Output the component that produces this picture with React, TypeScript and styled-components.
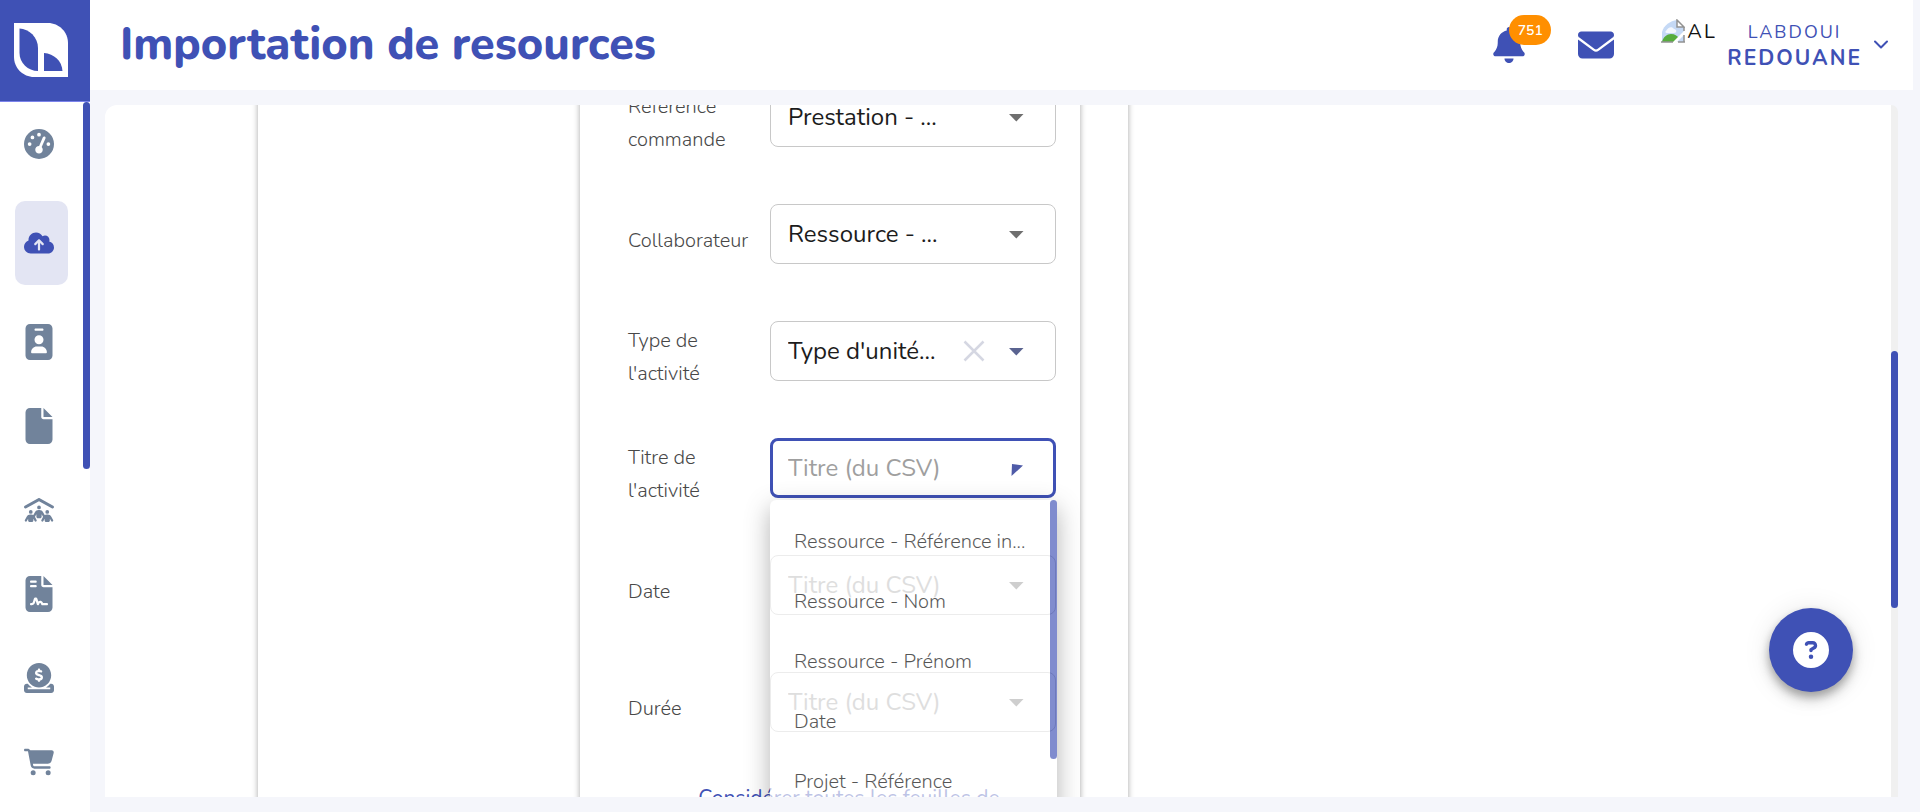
import React from 'react';
import styled, { createGlobalStyle, css } from 'styled-components';
import {
  FaBell,
  FaCartShopping,
  FaCircleDollarToSlot,
  FaCircleQuestion,
  FaCloudArrowUp,
  FaEnvelope,
  FaFile,
  FaFileContract,
  FaGaugeHigh,
  FaIdBadge,
  FaPeopleRoof,
} from 'react-icons/fa6';

const PRIMARY = '#3f51b5';
const BACKDROP = '#f5f6fb';

const GlobalStyle = createGlobalStyle`
  *, *::before, *::after { box-sizing: border-box; }
  body {
    margin: 0;
    background: ${BACKDROP};
    font-family: Nunito, Lato, "Open Sans", sans-serif;
    overflow: hidden;
  }
  button, select { font: inherit; }
  button { border: 0; padding: 0; background: none; cursor: pointer; }
`;

/* ---------- shell ---------- */

const Shell = styled.div`
  display: grid;
  grid-template-columns: 90px minmax(0, 1fr);
  height: 100vh;
`;

const Sidebar = styled.aside`
  display: flex;
  flex-direction: column;
  min-height: 0;
  background: #fff;
`;

const LogoLink = styled.a`
  flex: none;
  display: block;
  height: 102px;
  padding: 23px 14px;
  background: ${PRIMARY};
  border-bottom: 1px solid #7b83ec;

  svg { display: block; }
`;

const NavArea = styled.div`
  flex: 1;
  display: flex;
  justify-content: space-between;
  min-height: 0;
  overflow: hidden;
`;

const NavList = styled.nav`
  flex: 1;
  padding: 0 15px;
`;

const NavLink = styled.a<{ $active?: boolean }>`
  display: flex;
  align-items: center;
  justify-content: center;
  height: 84px;
  padding-right: 5px;
  border-radius: 10px;
  color: #71839b;

  svg { flex: none; width: 30px; height: 36px; }

  ${(p) =>
    p.$active &&
    css`
      margin: 15px 0;
      background: #e3e5f3;
      color: ${PRIMARY};
    `}
`;

const NavThumb = styled.div`
  width: 7px;
  height: 367px;
  border-radius: 4px;
  background: ${PRIMARY};
`;

const Main = styled.div`
  display: flex;
  flex-direction: column;
  min-width: 0;
  min-height: 0;
`;

/* ---------- header ---------- */

const Header = styled.header`
  flex: none;
  display: flex;
  align-items: center;
  justify-content: space-between;
  height: 90px;
  margin-right: 7px;
  padding: 0 25px 0 30px;
  background: #fff;
  color: ${PRIMARY};
`;

const Title = styled.h1`
  margin: 0;
  font-size: 45px;
  line-height: 60px;
  font-weight: 800;
`;

const HeaderActions = styled.div`
  display: flex;
  align-items: center;
`;

const IconButton = styled.button`
  position: relative;
  display: flex;
  margin-right: 51px;
  color: ${PRIMARY};
`;

const Badge = styled.span`
  position: absolute;
  left: 18px;
  top: -12px;
  width: 42px;
  height: 30px;
  border-radius: 15px;
  background: #ff8f00;
  color: #fff;
  font-size: 14px;
  line-height: 32px;
  font-weight: 600;
  text-align: center;
`;

const ProfileButton = styled.button`
  display: flex;
  align-items: center;
  margin-left: -4px;
  color: ${PRIMARY};
  letter-spacing: 2px;
`;

const Avatar = styled.span`
  display: flex;
  gap: 2px;
  width: 54px;
  height: 54px;
  padding-top: 1px;
  margin-right: 12px;
  color: #111;
  font-size: 20px;
  line-height: 26px;
  overflow: hidden;

  svg { flex: none; }
`;

const ProfileName = styled.span`
  display: flex;
  flex-direction: column;
  align-items: center;
  margin-right: 12px;
  font-size: 18px;
  line-height: 26px;

  strong { font-size: 21px; font-weight: 700; }
`;

/* ---------- content ---------- */

const Content = styled.main`
  flex: 1;
  display: flex;
  min-height: 0;
  padding: 15px;
  margin-right: 7px;
`;

const ScrollCard = styled.section`
  flex: 1;
  display: flex;
  align-items: flex-start;
  min-width: 0;
  border-radius: 12px 0 0 0;
  background: #fff;
  overflow: hidden;
`;

const Track = styled.div`
  flex: none;
  width: 7px;
  padding-top: 246px;
  border-radius: 0 7px 0 0;
  background: #f0f0f0;
`;

const TrackThumb = styled.div`
  height: 257px;
  border-radius: 4px;
  background: ${PRIMARY};
`;

const OuterPanel = styled.div`
  width: 870px;
  margin: -47px 0 0 153px;
  padding: 0 48px 0 322px;
  box-shadow: 0 0 6px rgba(0, 0, 0, 0.35);
`;

const MappingForm = styled.form`
  display: flex;
  flex-direction: column;
  min-height: 860px;
  padding: 0 24px 0 48px;
  box-shadow: 0 0 6px rgba(0, 0, 0, 0.35);
`;

const FieldRow = styled.div`
  display: grid;
  grid-template-columns: 142px minmax(0, 1fr);
  align-items: center;
  height: 117px;
`;

const FieldLabel = styled.label`
  padding: 13px 8px 0 0;
  color: #484848;
  font-size: 20px;
  font-weight: 300;
  line-height: 33px;
`;

const Control = styled.div`
  position: relative;
  color: #6f6f6f;
`;

const Select = styled.select<{ $empty?: boolean; $open?: boolean }>`
  display: block;
  appearance: none;
  width: 100%;
  height: 60px;
  margin: 0;
  padding: 0 100px 0 ${(p) => (p.$open ? 15 : 17)}px;
  border: ${(p) => (p.$open ? `3px solid ${PRIMARY}` : '1px solid #c8c8c8')};
  border-radius: 8px;
  background: #fff;
  color: ${(p) => (p.$empty ? '#9f9f9f' : '#1c1c1c')};
  font-size: 24px;
  outline: none;
`;

const Arrow = styled.svg`
  position: absolute;
  right: 32px;
  top: 22px;
  pointer-events: none;
`;

const ClearButton = styled.button`
  position: absolute;
  right: 71px;
  top: 19px;
  display: flex;
`;

const Menu = styled.ul`
  position: absolute;
  z-index: 2;
  top: 62px;
  left: 0;
  width: 287px;
  height: 384px;
  margin: 0;
  padding: 12px 24px;
  border-radius: 6px;
  background: #fff;
  box-shadow: 0 8px 24px rgba(0, 0, 0, 0.45);
  opacity: 0.66;
  list-style: none;
`;

const MenuItem = styled.li`
  color: #000;
  font-size: 20px;
  font-weight: 300;
  line-height: 60px;
  white-space: nowrap;
`;

const MenuThumb = styled.div`
  position: absolute;
  top: 0;
  right: 0;
  width: 7px;
  height: 259px;
  border-radius: 4px;
  background: ${PRIMARY};
`;

const AllSheetsButton = styled.button`
  align-self: center;
  margin: 22px 0 0 14px;
  color: ${PRIMARY};
  font-size: 21px;
  line-height: 32px;
`;

const HelpButton = styled.button`
  position: fixed;
  right: 67px;
  bottom: 120px;
  display: flex;
  align-items: center;
  justify-content: center;
  width: 84px;
  height: 84px;
  border-radius: 50%;
  background: ${PRIMARY};
  color: #fff;
  box-shadow: 0 5px 8px rgba(0, 0, 0, 0.25), 0 8px 16px rgba(0, 0, 0, 0.14),
    0 2px 28px rgba(0, 0, 0, 0.1);
`;

/* ---------- data ---------- */

const NAV = [
  { label: 'Tableau de bord', Icon: FaGaugeHigh },
  { label: 'Importation', Icon: FaCloudArrowUp, active: true },
  { label: 'Collaborateurs', Icon: FaIdBadge },
  { label: 'Documents', Icon: FaFile },
  { label: 'Équipes', Icon: FaPeopleRoof },
  { label: 'Contrats', Icon: FaFileContract },
  { label: 'Facturation', Icon: FaCircleDollarToSlot },
  { label: 'Achats', Icon: FaCartShopping },
];

const PLACEHOLDER = 'Titre (du CSV)';

const FIELDS: { label: string; value?: string; clearable?: boolean; open?: boolean }[] = [
  { label: 'Référence commande', value: 'Prestation - ...' },
  { label: 'Collaborateur', value: 'Ressource - ...' },
  { label: "Type de l'activité", value: "Type d'unité...", clearable: true },
  { label: "Titre de l'activité", open: true },
  { label: 'Date' },
  { label: 'Durée' },
];

const OPTIONS = [
  'Ressource - Référence in...',
  'Ressource - Nom',
  'Ressource - Prénom',
  'Date',
  'Projet - Référence',
];

/* ---------- drawings ---------- */

const Logo = () => (
  <svg width="54" height="54" viewBox="0 0 54 54" aria-hidden="true">
    <path fill="#fff" d="M0 0h34c11 0 20 9 20 20v34H20C9 54 0 45 0 34z" />
    <path fill={PRIMARY} d="M5.500 5.500C15 6 24 14 24 25v23C14 48 5.500 40 5.500 30z" />
    <path fill={PRIMARY} d="M30 30c10 .8 18 8 18.500 18H30z" />
  </svg>
);

const BrokenImage = () => (
  <svg width="24" height="24" viewBox="0 0 24 24" aria-hidden="true">
    <path fill="#c5d9f5" d="M1 23V13C3 6 9 2 16 1l7 7v15z" />
    <path fill="#f4f8fe" d="M5 12c2-4 6-5 8-2 3 0 3 4 0 4H6c-2 0-2-2-1-2z" />
    <path fill="#57ad3d" d="M1 23c1-5 5-8 9-8s6 2 8 4l-5 4z" />
    <path fill="#fff" stroke="#929292" strokeWidth="1.500" d="M16 1v7h7z" />
    <path fill="#fff" d="M24 11v4L15 24h-4z" />
    <path stroke="#929292" strokeWidth="1.500" d="M0 23h12M17 23h7M23 16v7M23 8v4" />
  </svg>
);

const Caret = ({ field }: { field: (typeof FIELDS)[number] }) => (
  <Arrow width="16" height="16" viewBox="0 0 16 16" aria-hidden="true">
    {field.open ? (
      <path fill="#4f5ba8" d="M4 4l11 1.500L3.500 16z" />
    ) : (
      <path fill={field.clearable ? '#5a6390' : 'currentColor'} d="M1 5h14.500L8.300 12.500z" />
    )}
  </Arrow>
);

export default function App() {
  return (
    <Shell>
      <GlobalStyle />
      <Sidebar>
        <LogoLink href="#" aria-label="Accueil">
          <Logo />
        </LogoLink>
        <NavArea>
          <NavList>
            {NAV.map(({ label, Icon, active }) => (
              <NavLink key={label} href="#" aria-label={label} $active={active}>
                <Icon />
              </NavLink>
            ))}
          </NavList>
          <NavThumb />
        </NavArea>
      </Sidebar>

      <Main>
        <Header>
          <Title>Importation de resources</Title>
          <HeaderActions>
            <IconButton aria-label="Notifications">
              <FaBell size={36} />
              <Badge>751</Badge>
            </IconButton>
            <IconButton aria-label="Messages">
              <FaEnvelope size={36} />
            </IconButton>
            <ProfileButton>
              <Avatar>
                <BrokenImage />
                AL
              </Avatar>
              <ProfileName>
                LABDOUI
                <strong>REDOUANE</strong>
              </ProfileName>
              <svg width="14" height="10" viewBox="0 0 14 10" aria-hidden="true">
                <path d="M1 1.500l6 6 6-6" fill="none" stroke={PRIMARY} strokeWidth="2" strokeLinecap="round" strokeLinejoin="round" />
              </svg>
            </ProfileButton>
          </HeaderActions>
        </Header>

        <Content>
          <ScrollCard>
            <OuterPanel>
              <MappingForm>
                {FIELDS.map((field, i) => (
                  <FieldRow key={field.label}>
                    <FieldLabel htmlFor={`field-${i}`}>{field.label}</FieldLabel>
                    <Control>
                      <Select id={`field-${i}`} $empty={!field.value} $open={field.open}>
                        <option>{field.value ?? PLACEHOLDER}</option>
                      </Select>
                      {field.clearable && (
                        <ClearButton type="button" aria-label="Effacer">
                          <svg width="22" height="22" viewBox="0 0 22 22" aria-hidden="true">
                            <path d="M1.500 1.500l19 19M20.500 1.500l-19 19" stroke="#d5d7e2" strokeWidth="2.500" />
                          </svg>
                        </ClearButton>
                      )}
                      <Caret field={field} />
                      {field.open && (
                        <Menu>
                          {OPTIONS.map((option) => (
                            <MenuItem key={option}>{option}</MenuItem>
                          ))}
                          <MenuThumb />
                        </Menu>
                      )}
                    </Control>
                  </FieldRow>
                ))}
                <AllSheetsButton type="button">Considérer toutes les feuilles de</AllSheetsButton>
              </MappingForm>
            </OuterPanel>
          </ScrollCard>
          <Track>
            <TrackThumb />
          </Track>
        </Content>
      </Main>

      <HelpButton aria-label="Aide">
        <FaCircleQuestion size={36} />
      </HelpButton>
    </Shell>
  );
}
